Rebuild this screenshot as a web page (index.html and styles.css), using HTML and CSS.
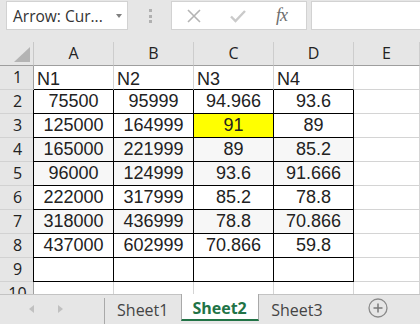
FILE: index.html
```html
<!DOCTYPE html>
<html lang="en">
  <head>
    <meta charset="UTF-8" />
    <title>Sheet2</title>
    <link rel="stylesheet" href="styles.css">
  </head>
  <body>
    <div class="formula-bar">
      <div class="name-box">
        <span>Arrow: Cur...</span>
        <span class="drop"></span>
      </div>
      <div class="grip"><i></i><i></i><i></i></div>
      <div class="fx-buttons">
        <svg class="icon-x" width="14" height="14" viewBox="0 0 14 14">
          <path d="M1 1 L13 13 M13 1 L1 13" stroke="#b4b4b4" stroke-width="1.6" fill="none" />
        </svg>
        <svg class="icon-ok" width="16" height="14" viewBox="0 0 16 14">
          <path d="M1 7.5 L5.5 12 L15 2" stroke="#cacaca" stroke-width="2.4" fill="none" />
        </svg>
        <span class="fx">fx</span>
      </div>
      <div class="formula-input"></div>
    </div>

    <div class="sheet">
      <div class="corner"><span class="tri"></span></div>
      <div class="col-head">A</div>
      <div class="col-head">B</div>
      <div class="col-head">C</div>
      <div class="col-head">D</div>
      <div class="col-head">E</div>

      <div class="row-head">1</div>
      <div class="cell label edge">N1</div>
      <div class="cell label edge">N2</div>
      <div class="cell label edge">N3</div>
      <div class="cell label edge">N4</div>
      <div class="cell"></div>

      <div class="row-head">2</div>
      <div class="cell data">75500</div>
      <div class="cell data">95999</div>
      <div class="cell data">94.966</div>
      <div class="cell data">93.6</div>
      <div class="cell"></div>

      <div class="row-head">3</div>
      <div class="cell data">125000</div>
      <div class="cell data">164999</div>
      <div class="cell data hl">91</div>
      <div class="cell data">89</div>
      <div class="cell"></div>

      <div class="row-head">4</div>
      <div class="cell data alt">165000</div>
      <div class="cell data alt">221999</div>
      <div class="cell data alt">89</div>
      <div class="cell data alt">85.2</div>
      <div class="cell"></div>

      <div class="row-head">5</div>
      <div class="cell data alt">96000</div>
      <div class="cell data alt">124999</div>
      <div class="cell data alt">93.6</div>
      <div class="cell data alt">91.666</div>
      <div class="cell"></div>

      <div class="row-head">6</div>
      <div class="cell data">222000</div>
      <div class="cell data">317999</div>
      <div class="cell data">85.2</div>
      <div class="cell data">78.8</div>
      <div class="cell"></div>

      <div class="row-head">7</div>
      <div class="cell data alt">318000</div>
      <div class="cell data alt">436999</div>
      <div class="cell data alt">78.8</div>
      <div class="cell data alt">70.866</div>
      <div class="cell"></div>

      <div class="row-head">8</div>
      <div class="cell data">437000</div>
      <div class="cell data">602999</div>
      <div class="cell data">70.866</div>
      <div class="cell data">59.8</div>
      <div class="cell"></div>

      <div class="row-head">9</div>
      <div class="cell data"></div>
      <div class="cell data"></div>
      <div class="cell data"></div>
      <div class="cell data"></div>
      <div class="cell"></div>

      <div class="row-head">10</div>
      <div class="cell"></div>
      <div class="cell"></div>
      <div class="cell"></div>
      <div class="cell"></div>
      <div class="cell"></div>
    </div>

    <div class="tab-bar">
      <div class="tab-nav">
        <span class="arrow left"></span>
        <span class="arrow right"></span>
      </div>
      <div class="tab">Sheet1</div>
      <div class="tab active">Sheet2</div>
      <div class="tab">Sheet3</div>
      <div class="add-sheet">
        <svg width="20" height="20" viewBox="0 0 20 20">
          <circle cx="10" cy="10" r="9" stroke="#8a8a8a" stroke-width="1.3" fill="none" />
          <path d="M10 5.5 V14.5 M5.5 10 H14.5" stroke="#7a7a7a" stroke-width="1.5" />
        </svg>
      </div>
    </div>
  </body>
</html>
```

FILE: styles.css
```css
* {
  box-sizing: border-box;
}

body {
  margin: 0;
  width: 420px;
  height: 324px;
  overflow: hidden;
  background: #e6e6e6;
  font-family: 'Open Sans', 'Noto Sans', sans-serif;
}

/* formula bar */
.formula-bar {
  display: flex;
  height: 42px;
  padding-top: 1px;
}

.name-box {
  display: flex;
  align-items: center;
  justify-content: space-between;
  width: 122px;
  height: 29px;
  margin-left: 6px;
  padding: 0 5px 0 6px;
  background: white;
  border: 1px solid #d2d2d2;
  font-size: 15.5px;
  color: #333;
  white-space: nowrap;
}

.drop {
  width: 0;
  height: 0;
  border-left: 3.5px solid transparent;
  border-right: 3.5px solid transparent;
  border-top: 4px solid #808080;
}

.grip {
  display: flex;
  flex-direction: column;
  gap: 2.5px;
  width: 43px;
  padding: 8px 0 0 21px;
}

.grip i {
  width: 3px;
  height: 3px;
  background: #b0b0b0;
}

.fx-buttons {
  display: flex;
  align-items: center;
  width: 136px;
  height: 29px;
  background: white;
  border: 1px solid #d2d2d2;
}

.icon-x {
  margin-left: 15px;
}

.icon-ok {
  margin-left: 29px;
}

.fx {
  margin-left: 30px;
  font-family: 'Liberation Serif', 'DejaVu Serif', serif;
  font-style: italic;
  font-size: 18px;
  color: #6e6e6e;
  letter-spacing: -1px;
}

.formula-input {
  flex: 1;
  height: 29px;
  margin-left: 4px;
  background: white;
  border: 1px solid #d2d2d2;
  border-right: none;
}

/* grid */
.sheet {
  display: grid;
  grid-template-columns: 34px 80px 80px 80px 80px 66px;
  grid-template-rows: 24px repeat(10, 24px);
  height: 252px;
  overflow: hidden;
}

.corner,
.col-head,
.row-head {
  background: #e6e6e6;
  color: #222;
  font-size: 16px;
}

.corner {
  border-right: 1px solid #c8c8c8;
  border-bottom: 1px solid #9e9e9e;
  position: relative;
}

.tri {
  position: absolute;
  right: 3px;
  bottom: 3px;
  width: 0;
  height: 0;
  border-left: 16px solid transparent;
  border-bottom: 15px solid #b4b4b4;
}

.col-head {
  text-align: center;
  line-height: 23px;
  border-right: 1px solid #cdcdcd;
  border-bottom: 1px solid #9e9e9e;
}

.row-head {
  text-align: center;
  line-height: 23px;
  padding-left: 2px;
  border-right: 1px solid #9e9e9e;
  border-bottom: 1px solid #d2d2d2;
}

.cell {
  background: white;
  border-right: 1px solid #d4d4d4;
  border-bottom: 1px solid #d4d4d4;
  font-family: 'Liberation Sans', Arial, sans-serif;
  font-size: 18px;
  color: #222;
  line-height: 23px;
  white-space: nowrap;
}

.label {
  padding-left: 3px;
  line-height: 26px;
}

.edge {
  border-bottom-color: #000;
}

.data {
  text-align: center;
  border-right-color: #000;
  border-bottom-color: #000;
}

.sheet .data:nth-child(6n + 2) {
  box-shadow: -1px 0 0 #000;
}

.alt {
  background: #f7f7f7;
}

.hl {
  background: #ffff00;
}

/* sheet tabs */
.tab-bar {
  display: flex;
  height: 30px;
  border-top: 1px solid #c3c3c3;
  background: #e6e6e6;
  color: #444;
  font-size: 16px;
}

.tab-nav {
  display: flex;
  align-items: center;
  gap: 24px;
  width: 105px;
  padding-left: 29px;
  padding-bottom: 2px;
}

.arrow {
  width: 0;
  height: 0;
  border-top: 4.5px solid transparent;
  border-bottom: 4.5px solid transparent;
}

.arrow.left {
  border-right: 5px solid #c0c0c0;
}

.arrow.right {
  border-left: 5px solid #c0c0c0;
}

.tab {
  width: 78px;
  height: 26px;
  line-height: 24px;
  text-align: center;
  border-left: 1px solid #a9a9a9;
  margin-top: 3px;
}

.tab.active + .tab {
  border-left: none;
}

.tab:last-of-type {
  border-right: 1px solid #a9a9a9;
  height: 21px;
}

.tab.active {
  width: 79px;
  height: 27px;
  margin-top: -1px;
  line-height: 28px;
  background: white;
  border-left: 1px solid #a9a9a9;
  border-right: 1px solid #a9a9a9;
  border-bottom: 2px solid #217346;
  color: #217346;
  font-weight: bold;
}

.add-sheet {
  display: flex;
  align-items: center;
  justify-content: center;
  width: 86px;
  padding-bottom: 3px;
}
```
